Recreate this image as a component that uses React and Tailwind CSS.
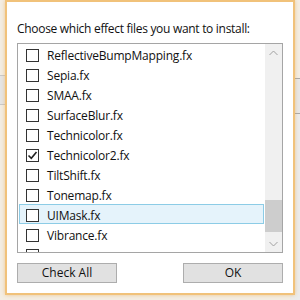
import React from 'react';

const files = [
  { name: 'ReflectiveBumpMapping.fx' },
  { name: 'Sepia.fx' },
  { name: 'SMAA.fx' },
  { name: 'SurfaceBlur.fx' },
  { name: 'Technicolor.fx' },
  { name: 'Technicolor2.fx', checked: true },
  { name: 'TiltShift.fx' },
  { name: 'Tonemap.fx' },
  { name: 'UIMask.fx', hot: true },
  { name: 'Vibrance.fx' },
  { name: '' },
];

function CheckBox({ checked }) {
  return (
    <span className="w-[13px] h-[13px] shrink-0 border border-[#333] bg-white flex items-center justify-center">
      {checked && (
        <svg width="11" height="11" viewBox="0 0 11 11">
          <path d="M1.5 5.5 L4.3 8.3 L9.5 2" fill="none" stroke="#222" strokeWidth="1.6" />
        </svg>
      )}
    </span>
  );
}

export default function App() {
  return (
    <div
      className="relative w-[300px] h-[300px] overflow-hidden bg-[#f4eee4]"
      style={{ fontFamily: '"Open Sans", "Noto Sans", sans-serif' }}
    >
      {/* background window peeking out at the sides */}
      <div className="absolute left-0 top-[75px] w-[10px] h-[30px] bg-[#e6e6e6] border-y border-[#c9c9c9]" />
      <div className="absolute right-0 top-[78px] w-[10px] h-[36px] bg-[#e8e8e8] border-y border-[#a9a9a9]" />
      <div className="absolute right-0 top-[114px] w-[10px] h-[190px] bg-[#ececec]" />

      <div className="relative ml-[5px] w-[290px] h-[295px] border-2 border-[#f1c27a] bg-white shadow-[0_0_4px_rgba(230,160,60,0.5)] flex flex-col px-[10px]">
        <p className="mt-[18px] h-[18px] text-[12px] leading-[18px] text-[#111] tracking-[-0.3px] whitespace-nowrap">
          Choose which effect files you want to install:
        </p>

        <div className="mt-[5px] w-[266px] h-[210px] border border-[#a5a5a5] flex overflow-hidden">
          <div className="flex-1 flex flex-col">
            {files.map((f, i) => (
              <div
                key={i}
                className={`h-[20px] shrink-0 flex items-center gap-[8px] pl-[6px] pt-[3px] ml-[1px] mr-[1px] border ${
                  f.hot ? 'bg-[#e5f3fb] border-[#8ccce6]' : 'border-transparent'
                }`}
              >
                <CheckBox checked={f.checked} />
                <span className="text-[12px] leading-[16px] text-[#111] tracking-[-0.2px] whitespace-nowrap">
                  {f.name}
                </span>
              </div>
            ))}
          </div>
          <div className="w-[17px] bg-[#f0f0f0] flex flex-col items-center">
            <div className="h-[17px] flex items-center justify-center">
              <svg width="9" height="6" viewBox="0 0 9 6">
                <path d="M0.5 5 L4.5 1 L8.5 5" fill="none" stroke="#a0a0a0" strokeWidth="1" />
              </svg>
            </div>
            <div className="mt-[139px] w-[17px] h-[32px] bg-[#cdcdcd]" />
            <div className="mt-auto h-[17px] flex items-center justify-center">
              <svg width="9" height="6" viewBox="0 0 9 6">
                <path d="M0.5 1 L4.5 5 L8.5 1" fill="none" stroke="#a0a0a0" strokeWidth="1" />
              </svg>
            </div>
          </div>
        </div>

        <div className="mt-[10px] flex justify-between w-[266px]">
          <button className="w-[100px] h-[20px] bg-[#e1e1e1] border border-[#adadad] text-[12px] leading-[18px] text-[#111]">
            Check All
          </button>
          <button className="w-[100px] h-[20px] bg-[#e1e1e1] border border-[#adadad] text-[12px] leading-[18px] text-[#111]">
            OK
          </button>
        </div>
      </div>
    </div>
  );
}
